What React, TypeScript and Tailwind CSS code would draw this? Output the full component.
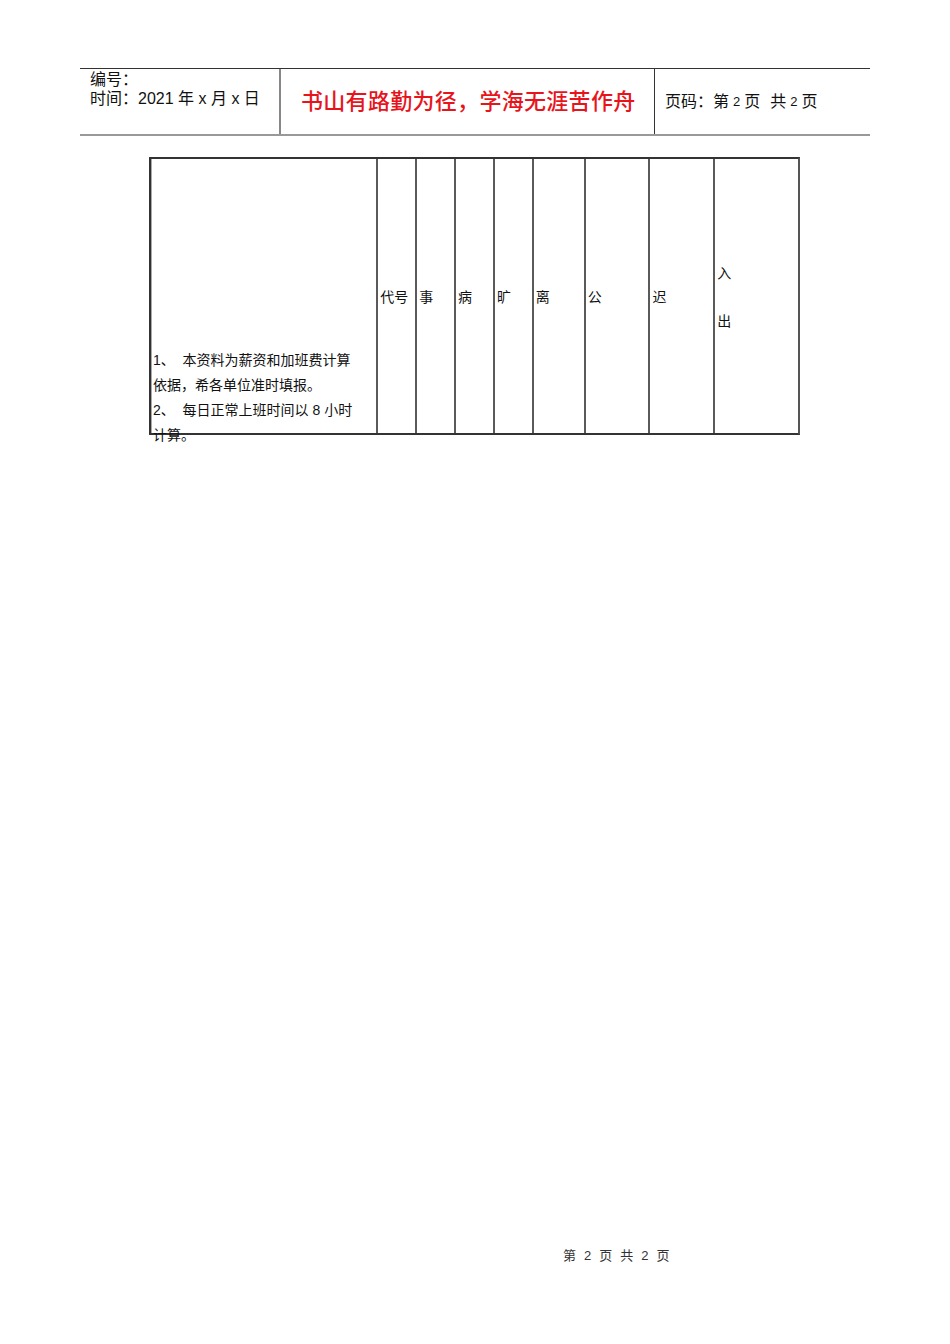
const sans = { fontFamily: '"Liberation Sans", "Noto Sans CJK SC", sans-serif' };

const cols = [
  { w: "w-[39px]", label: ["代号"] },
  { w: "w-[39px]", label: ["事"] },
  { w: "w-[39px]", label: ["病"] },
  { w: "w-[39px]", label: ["旷"] },
  { w: "w-[52px]", label: ["离"] },
  { w: "w-[65px]", label: ["公"] },
  { w: "w-[65px]", label: ["迟"] },
  { w: "w-[85px]", label: ["入", "出"] },
];

export default function App() {
  return (
    <div
      className="relative w-[950px] min-h-[1344px] bg-white text-[#111]"
      style={sans}
    >
      {/* page header */}
      <div className="pt-[68px] px-[80px]">
        <div className="flex h-[68px] border-t border-b-2 border-t-[#333] border-b-[#999]">
          <div className="w-[201px] border-r-2 border-[#888] pl-[10px] pt-[1px] text-[16px] leading-[19px]">
            <div>编号：</div>
            <div>时间：2021 年 x 月 x 日</div>
          </div>
          <div className="w-[373px] flex items-center pl-[20px] text-[22px] tracking-[0.3px] font-medium text-[#e8141c]">
            书山有路勤为径，学海无涯苦作舟
          </div>
          <div className="flex-1 flex items-center border-l border-[#333] pl-[10px] text-[16px]">
            页码：第<span className="text-[13px] mx-[4px]">2</span>页
            <span className="ml-[10px]">共</span>
            <span className="text-[13px] mx-[4px]">2</span>页
          </div>
        </div>
      </div>

      {/* attendance table */}
      <div className="mt-[21px] ml-[149px] w-[651px] h-[278px] flex border-2 border-[#333] border-r-[#555]">
        <div className="w-[226px] flex flex-col justify-end pl-[1px] border-l border-[#aaa] text-[14px] leading-[25px]">
          <div className="-mb-[15px] whitespace-pre">
            <div>1、  本资料为薪资和加班费计算</div>
            <div>依据，希各单位准时填报。</div>
            <div>2、  每日正常上班时间以 8 小时</div>
            <div>计算。</div>
          </div>
        </div>
        {cols.map((c, i) => (
          <div
            key={i}
            className={`${c.w} flex flex-col justify-center gap-[30px] pt-[2px] pl-[2px] border-l-2 border-[#5a5a5a] text-[14px] leading-[18px]`}
          >
            {c.label.map((t) => (
              <div key={t}>{t}</div>
            ))}
          </div>
        ))}
      </div>

      {/* page footer */}
      <div className="mt-[812px] ml-[563px] flex gap-[8px] text-[13px] leading-[17px] text-[#333]">
        <span>第</span>
        <span>2</span>
        <span>页</span>
        <span>共</span>
        <span>2</span>
        <span>页</span>
      </div>
    </div>
  );
}
